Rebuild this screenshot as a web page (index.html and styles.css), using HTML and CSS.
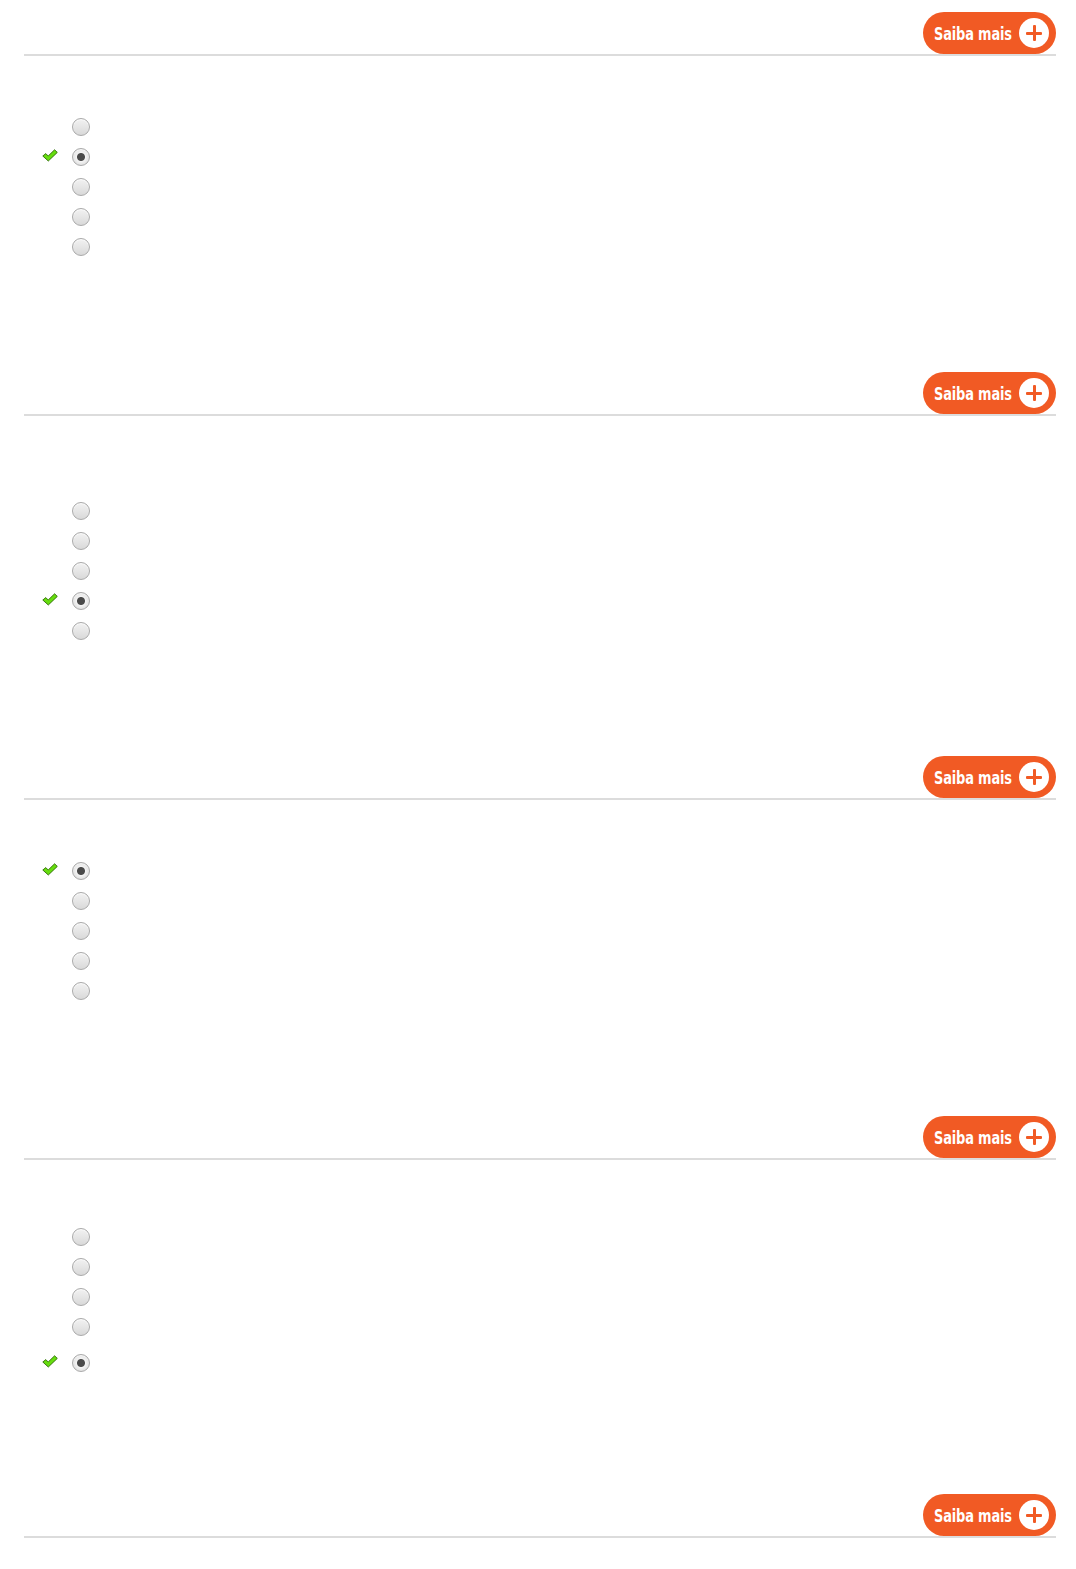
FILE: index.html
```html
<!DOCTYPE html>
<html lang="pt-BR">
<head>
<meta charset="UTF-8">
<meta name="viewport" content="width=device-width, initial-scale=1.0">
<title>Questionário</title>
<link rel="stylesheet" href="styles.css">
</head>
<body>
    <div id="quiz">

        <div class="question">
            <div class="questionHeader">
                <a class="moreButton" href="#"><span class="label">Saiba mais</span><span class="plus"></span></a>
            </div>
            <div class="prompt"></div>
            <ul class="options">
                <li><span class="mark"></span><input type="radio" name="q1"></li>
                <li><span class="mark"><svg class="check" viewBox="0 0 16 13"><path d="M0.8 7 L3.8 4.6 L6.2 7 L12.6 0.8 L15.3 3.4 L6.3 12 Z"/></svg></span><input type="radio" name="q1" checked></li>
                <li><span class="mark"></span><input type="radio" name="q1"></li>
                <li><span class="mark"></span><input type="radio" name="q1"></li>
                <li><span class="mark"></span><input type="radio" name="q1"></li>
            </ul>
        </div>

        <div class="question">
            <div class="questionHeader">
                <a class="moreButton" href="#"><span class="label">Saiba mais</span><span class="plus"></span></a>
            </div>
            <div class="prompt promptTall"></div>
            <ul class="options">
                <li><span class="mark"></span><input type="radio" name="q2"></li>
                <li><span class="mark"></span><input type="radio" name="q2"></li>
                <li><span class="mark"></span><input type="radio" name="q2"></li>
                <li><span class="mark"><svg class="check" viewBox="0 0 16 13"><path d="M0.8 7 L3.8 4.6 L6.2 7 L12.6 0.8 L15.3 3.4 L6.3 12 Z"/></svg></span><input type="radio" name="q2" checked></li>
                <li><span class="mark"></span><input type="radio" name="q2"></li>
            </ul>
        </div>

        <div class="question">
            <div class="questionHeader">
                <a class="moreButton" href="#"><span class="label">Saiba mais</span><span class="plus"></span></a>
            </div>
            <div class="prompt"></div>
            <ul class="options">
                <li><span class="mark"><svg class="check" viewBox="0 0 16 13"><path d="M0.8 7 L3.8 4.6 L6.2 7 L12.6 0.8 L15.3 3.4 L6.3 12 Z"/></svg></span><input type="radio" name="q3" checked></li>
                <li><span class="mark"></span><input type="radio" name="q3"></li>
                <li><span class="mark"></span><input type="radio" name="q3"></li>
                <li><span class="mark"></span><input type="radio" name="q3"></li>
                <li><span class="mark"></span><input type="radio" name="q3"></li>
            </ul>
        </div>

        <div class="question">
            <div class="questionHeader">
                <a class="moreButton" href="#"><span class="label">Saiba mais</span><span class="plus"></span></a>
            </div>
            <div class="prompt promptMid"></div>
            <ul class="options">
                <li><span class="mark"></span><input type="radio" name="q4"></li>
                <li><span class="mark"></span><input type="radio" name="q4"></li>
                <li><span class="mark"></span><input type="radio" name="q4"></li>
                <li><span class="mark"></span><input type="radio" name="q4"></li>
                <li class="spaced"><span class="mark"><svg class="check" viewBox="0 0 16 13"><path d="M0.8 7 L3.8 4.6 L6.2 7 L12.6 0.8 L15.3 3.4 L6.3 12 Z"/></svg></span><input type="radio" name="q4" checked></li>
            </ul>
        </div>

        <div class="question">
            <div class="questionHeader">
                <a class="moreButton" href="#"><span class="label">Saiba mais</span><span class="plus"></span></a>
            </div>
        </div>

    </div>
</body>
</html>
```

FILE: styles.css
```css
body {
    font-family: Arial, "Liberation Sans", sans-serif;
    background-color: #fff;
    margin: 0;
    padding: 0;
}

#quiz {
    padding: 0 20px 31px 24px;
}

.questionHeader {
    display: flex;
    justify-content: flex-end;
    padding-top: 12px;
    border-bottom: 2px solid #dcdcdc;
}

.moreButton {
    display: flex;
    align-items: center;
    box-sizing: border-box;
    width: 133px;
    height: 42px;
    padding: 0 7px 0 11px;
    border-radius: 21px;
    background-color: #f15a24;
    color: #fff;
    text-decoration: none;
}

.label {
    display: inline-block;
    width: 79px;
    white-space: nowrap;
    font-family: "DejaVu Sans Condensed", "DejaVu Sans", sans-serif;
    font-weight: bold;
    font-size: 18px;
    letter-spacing: -0.2px;
    transform: scaleX(0.8);
    transform-origin: left center;
}

.plus {
    position: relative;
    width: 30px;
    height: 30px;
    margin-left: auto;
    border-radius: 50%;
    background-color: #fff;
    flex-shrink: 0;
}

.plus::before,
.plus::after {
    content: "";
    position: absolute;
    left: 50%;
    top: 50%;
    background-color: #f15a24;
    border-radius: 1px;
}

.plus::before {
    width: 16px;
    height: 3px;
    margin: -1.5px 0 0 -8px;
}

.plus::after {
    width: 3px;
    height: 16px;
    margin: -8px 0 0 -1.5px;
}

.prompt {
    height: 56px;
}

.promptTall {
    height: 80px;
}

.promptMid {
    height: 62px;
}

.options {
    list-style: none;
    margin: 0 0 98px 0;
    padding: 0;
}

.options li {
    display: flex;
    align-items: center;
    height: 30px;
}

.options li.spaced {
    padding: 6px 0;
}

.mark {
    display: flex;
    align-items: center;
    width: 48px;
    height: 30px;
    box-sizing: border-box;
    padding: 0 0 4px 18px;
}

.check {
    width: 16px;
    height: 13px;
    fill: #66dd0e;
    stroke: #2f6a08;
    stroke-width: 0.9;
    stroke-linejoin: round;
}

input[type="radio"] {
    -webkit-appearance: none;
    appearance: none;
    margin: 0;
    width: 18px;
    height: 18px;
    border-radius: 50%;
    border: 1px solid #a9a9a9;
    background: linear-gradient(#f2f2f2, #d9d9d9);
    box-shadow: inset 0 1px 1px rgba(255, 255, 255, 0.8);
}

input[type="radio"]:checked {
    background: radial-gradient(circle, #4a4a4a 0, #4a4a4a 3.5px, #f4f4f4 4.5px, #e2e2e2 8px);
}
```
